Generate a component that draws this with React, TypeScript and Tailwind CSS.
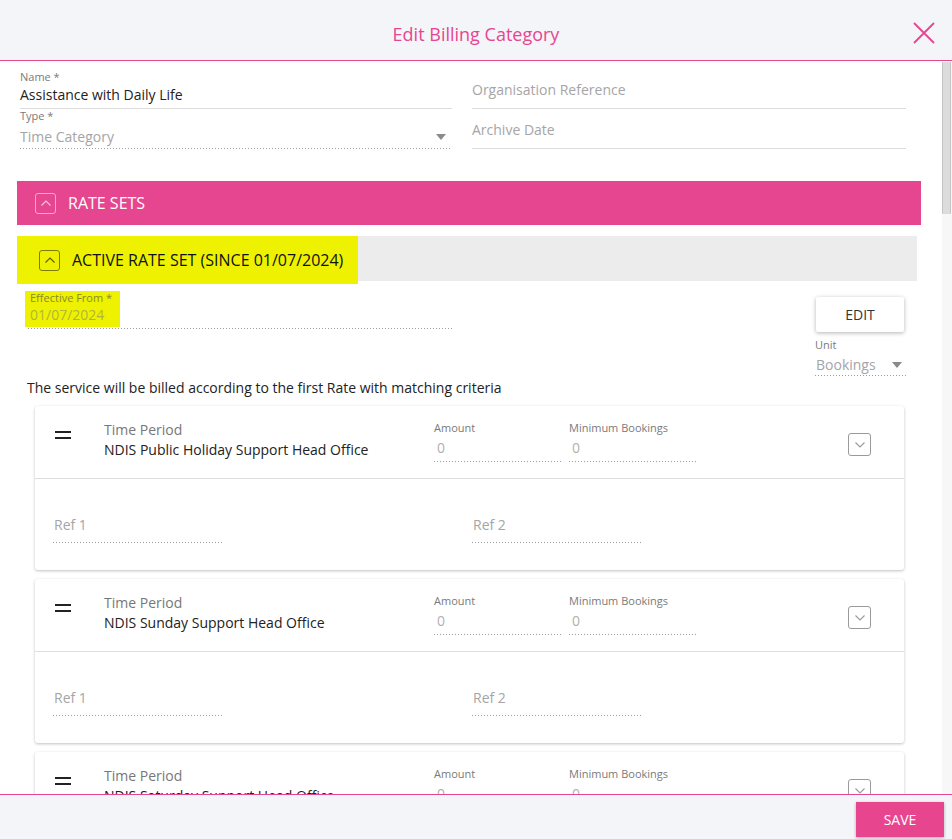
import { type ReactNode } from 'react';

const PINK = '#e8458f';

function Dotted({ className = '' }: { className?: string }) {
  return (
    <div
      className={`h-px bg-[linear-gradient(to_right,#9e9e9e_1px,transparent_1px)] bg-[length:3px_1px] bg-repeat-x ${className}`}
    />
  );
}

function Caret() {
  return (
    <svg width="10" height="6" viewBox="0 0 10 6" className="shrink-0">
      <path d="M0 0h10L5 6z" fill="#8a8a8a" />
    </svg>
  );
}

function ChevronBox({ dir, border, stroke, size = 'h-[21px] w-[21px]' }: { dir: 'up' | 'down'; border: string; stroke: string; size?: string }) {
  return (
    <div className={`flex shrink-0 items-center justify-center rounded-[3px] border ${size} ${border}`}>
      <svg width="12" height="8" viewBox="0 0 12 8">
        <path d={dir === 'up' ? 'M1.5 6.5L6 2l4.5 4.5' : 'M1.5 1.5L6 6l4.5-4.5'} fill="none" stroke={stroke} strokeWidth="1.1" />
      </svg>
    </div>
  );
}

function SmallField({ label, value, width }: { label: string; value: string; width: string }) {
  return (
    <div className={width}>
      <p className="text-[11px] leading-[14px] text-[#7a7a7a]">{label}</p>
      <p className="mt-[4px] pl-[3px] text-[14px] leading-[18px] text-[#b0b0b0]">{value}</p>
      <Dotted className="mt-[4px]" />
    </div>
  );
}

function RateCard({ period }: { period: string }) {
  return (
    <div className="ml-[18px] mr-[17px] shrink-0 rounded-[3px] bg-white shadow-[0_1px_3px_rgba(0,0,0,0.25)]">
      <div className="flex h-[73px] items-start border-b border-[#dedede]">
        <div className="ml-[20px] mt-[25px] flex w-[16px] flex-col gap-[4px]">
          <div className="h-[2px] bg-[#222]" />
          <div className="h-[2px] bg-[#222]" />
        </div>
        <div className="ml-[33px] mt-[14px] w-[330px]">
          <p className="text-[14px] leading-[20px] text-[#777]">Time Period</p>
          <p className="text-[14px] leading-[20px] text-[#222]">{period}</p>
        </div>
        <div className="mt-[15px] flex">
          <SmallField label="Amount" value="0" width="w-[129px]" />
          <div className="w-[6px]" />
          <SmallField label="Minimum Bookings" value="0" width="w-[129px]" />
        </div>
        <div className="ml-auto mr-[33px] mt-[27px]">
          <ChevronBox dir="down" border="border-[#9a9a9a]" stroke="#9a9a9a" size="h-[23px] w-[23px]" />
        </div>
      </div>
      <div className="flex h-[91px] items-start pt-[36px]">
        <div className="ml-[18px] w-[170px]">
          <p className="pl-[1px] text-[14px] leading-[20px] text-[#a5a5a5]">Ref 1</p>
          <Dotted className="mt-[7px]" />
        </div>
        <div className="ml-[249px] w-[169px]">
          <p className="pl-[1px] text-[14px] leading-[20px] text-[#a5a5a5]">Ref 2</p>
          <Dotted className="mt-[7px]" />
        </div>
      </div>
    </div>
  );
}

function Bar({ children, className }: { children: ReactNode; className: string }) {
  return <div className={`flex items-center ${className}`}>{children}</div>;
}

export default function App() {
  return (
    <div className="flex h-[839px] w-[952px] flex-col overflow-hidden bg-white font-['Open_Sans',sans-serif]">
      <header className="relative flex h-[61px] shrink-0 items-center justify-center border-b border-[#e8458f] bg-[#f4f5f9]">
        <h1 className="mt-[8px] text-[18px] text-[#e8458f]">Edit Billing Category</h1>
        <svg className="absolute right-[16px] top-[22px]" width="24" height="22" viewBox="0 0 24 22">
          <path d="M2 1l20 20M22 1L2 21" stroke={PINK} strokeWidth="1.8" />
        </svg>
      </header>

      <div className="flex min-h-0 flex-1">
        <div className="flex min-w-0 flex-1 flex-col overflow-hidden pl-[17px] pr-[21px] pt-[9px]">
          <div className="flex">
            <div className="ml-[3px] w-[432px]">
              <div>
                <p className="text-[11px] leading-[14px] text-[#7a7a7a]">Name *</p>
                <p className="text-[14px] leading-[22px] text-[#222]">Assistance with Daily Life</p>
                <div className="mt-[2px] h-px bg-[#dcdcdc]" />
              </div>
              <div>
                <p className="text-[11px] leading-[14px] text-[#7a7a7a]">Type *</p>
                <div className="mt-[3px] flex items-center justify-between pr-[6px]">
                  <p className="text-[14px] leading-[22px] text-[#a5a5a5]">Time Category</p>
                  <Caret />
                </div>
                <Dotted />
              </div>
            </div>
            <div className="ml-[20px] w-[434px]">
              <div className="pt-[9px]">
                <p className="text-[14px] leading-[22px] text-[#a5a5a5]">Organisation Reference</p>
                <div className="mt-[7px] h-px bg-[#dcdcdc]" />
              </div>
              <div className="pt-[10px]">
                <p className="text-[14px] leading-[22px] text-[#a5a5a5]">Archive Date</p>
                <div className="mt-[7px] h-px bg-[#dcdcdc]" />
              </div>
            </div>
          </div>

          <Bar className="mt-[32px] h-[44px] shrink-0 bg-[#e5468f] pl-[18px]">
            <ChevronBox dir="up" border="border-[#f4a9cc]" stroke="#f8c6dd" />
            <span className="ml-[12px] text-[16px] text-white">RATE SETS</span>
          </Bar>

          <div className="mr-[4px] mt-[11px] flex h-[45px] shrink-0 items-start bg-[#ececec]">
            <div className="flex h-[48px] w-[341px] items-center bg-[#eef200] pl-[22px]">
              <ChevronBox dir="up" border="border-[#7c7c00]" stroke="#5c5c00" />
              <span className="ml-[12px] text-[16px] text-[#111]">ACTIVE RATE SET (SINCE 01/07/2024)</span>
            </div>
          </div>

          <div className="mt-[10px] flex shrink-0 items-start">
            <div className="ml-[8px] w-[427px]">
              <div className="h-[36px] w-[95px] bg-[#eef200] pl-[5px]">
                <p className="text-[11px] leading-[14px] text-[#8a8a2c]">Effective From *</p>
                <p className="mt-[1px] text-[14px] leading-[18px] text-[#b4b43a]">01/07/2024</p>
              </div>
              <Dotted className="ml-[3px] mt-px" />
            </div>
            <div className="ml-auto mr-[15px] w-[91px]">
              <button className="ml-px mt-[6px] h-[35px] w-[88px] rounded-[2px] bg-white text-[14px] text-[#333] shadow-[0_1px_4px_rgba(0,0,0,0.3)]">
                EDIT
              </button>
              <p className="mt-[6px] text-[11px] leading-[14px] text-[#7a7a7a]">Unit</p>
              <div className="mt-[3px] flex items-center justify-between pl-px pr-[4px]">
                <p className="text-[14px] leading-[20px] text-[#a5a5a5]">Bookings</p>
                <Caret />
              </div>
              <Dotted />
            </div>
          </div>

          <p className="ml-[10px] mt-[2px] shrink-0 text-[14px] leading-[20px] text-[#222]">
            The service will be billed according to the first Rate with matching criteria
          </p>

          <div className="mt-[8px] flex flex-col gap-[9px]">
            <RateCard period="NDIS Public Holiday Support Head Office" />
            <RateCard period="NDIS Sunday Support Head Office" />
            <RateCard period="NDIS Saturday Support Head Office" />
          </div>
        </div>

        <div className="flex w-[10px] shrink-0 flex-col bg-[#f7f7f7]">
          <div className="mt-px h-[152px] w-[9px] rounded-[1px] border-x border-[#c4c4c4] bg-[#dcdcdc]" />
        </div>
      </div>

      <footer className="flex h-[45px] shrink-0 items-start justify-end border-t border-[#e8458f] bg-[#f4f5f9] pr-[8px] pt-[7px]">
        <button className="h-[35px] w-[88px] bg-[#e8458f] text-[14px] text-white shadow-[0_1px_3px_rgba(0,0,0,0.3)]">SAVE</button>
      </footer>
    </div>
  );
}
